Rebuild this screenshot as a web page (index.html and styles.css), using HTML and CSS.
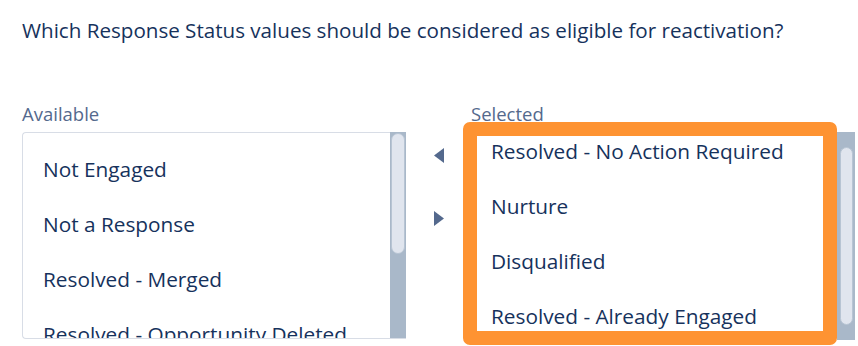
FILE: index.html
```html
<!DOCTYPE html>
<html lang="en">
<head>
    <meta charset="UTF-8">
    <title>Reactivation Status</title>
    <link rel="stylesheet" href="styles.css">
</head>
<body>
    <div class="page">
        <p class="question">Which Response Status values should be considered as eligible for reactivation?</p>
        <div class="dueling">
            <div class="column">
                <div class="label">Available</div>
                <div class="listbox">
                    <ul class="options">
                        <li>Not Engaged</li>
                        <li>Not a Response</li>
                        <li>Resolved - Merged</li>
                        <li>Resolved - Opportunity Deleted</li>
                    </ul>
                    <div class="scrollbar"><div class="thumb thumb-available"></div></div>
                </div>
            </div>
            <div class="buttons">
                <button class="move-button" aria-label="Move left">
                    <svg width="10" height="15" viewBox="0 0 10 15"><polygon points="10,0 10,15 0,7.5" fill="#54698d"/></svg>
                </button>
                <button class="move-button" aria-label="Move right">
                    <svg width="10" height="15" viewBox="0 0 10 15"><polygon points="0,0 0,15 10,7.5" fill="#54698d"/></svg>
                </button>
            </div>
            <div class="column">
                <div class="label">Selected</div>
                <div class="listbox listbox-selected">
                    <ul class="options options-scrolled">
                        <li>Resolved - No Action Required</li>
                        <li>Nurture</li>
                        <li>Disqualified</li>
                        <li>Resolved - Already Engaged</li>
                    </ul>
                    <div class="scrollbar scrollbar-wide"><div class="thumb thumb-selected"></div></div>
                    <div class="highlight"></div>
                </div>
            </div>
        </div>
    </div>
</body>
</html>
```

FILE: styles.css
```css
body {
    margin: 0;
    background-color: #ffffff;
    font-family: "Open Sans", Arial, sans-serif;
    color: #16325c;
}
.page {
    padding: 0 0 0 22px;
    height: 346px;
    overflow: hidden;
}
.question {
    margin: 0;
    padding-top: 17px;
    font-size: 20.6px;
    line-height: 26px;
}
.dueling {
    display: flex;
    margin-top: 60px;
}
.column {
    display: flex;
    flex-direction: column;
    width: 384px;
}
.label {
    font-size: 18.5px;
    line-height: 21px;
    color: #54698d;
    height: 21px;
    margin-bottom: 8px;
}
.listbox {
    position: relative;
    display: flex;
    height: 205px;
    border: 1px solid #d8dde6;
    border-right: none;
    border-radius: 4px 0 0 4px;
}
.listbox-selected {
    height: 208px;
    border: none;
}
.options {
    flex: 1;
    list-style: none;
    margin: 0;
    padding: 9px 0 0 20px;
    overflow: hidden;
}
.options-scrolled {
    padding: 0 0 0 20px;
}
.options li {
    height: 55px;
    line-height: 55px;
    font-size: 20.8px;
    white-space: nowrap;
}
.options-scrolled li:first-child {
    margin-top: -8px;
}
.scrollbar {
    width: 16px;
    background-color: #a9b8c9;
    padding: 1px 1px 0 1px;
    box-sizing: border-box;
    margin-top: -1px;
}
.scrollbar-wide {
    width: 18px;
    margin-top: 0;
    padding: 15px 2px 0 3px;
}
.thumb {
    background-color: #e0e5ee;
    border: 1px solid #b7c4d3;
    border-radius: 7px;
    box-sizing: border-box;
}
.thumb-available {
    height: 121px;
}
.thumb-selected {
    height: 178px;
}
.buttons {
    width: 65px;
    display: flex;
    flex-direction: column;
    align-items: center;
    padding-top: 45px;
    gap: 48px;
}
.move-button {
    background: none;
    border: none;
    padding: 0;
    width: 10px;
    height: 15px;
    display: block;
    cursor: pointer;
}
.move-button svg {
    display: block;
}
.highlight {
    position: absolute;
    left: -8px;
    top: -10px;
    width: 374px;
    height: 223px;
    border: 14px solid #fe9332;
    border-radius: 7px;
    box-sizing: border-box;
    pointer-events: none;
}
```
